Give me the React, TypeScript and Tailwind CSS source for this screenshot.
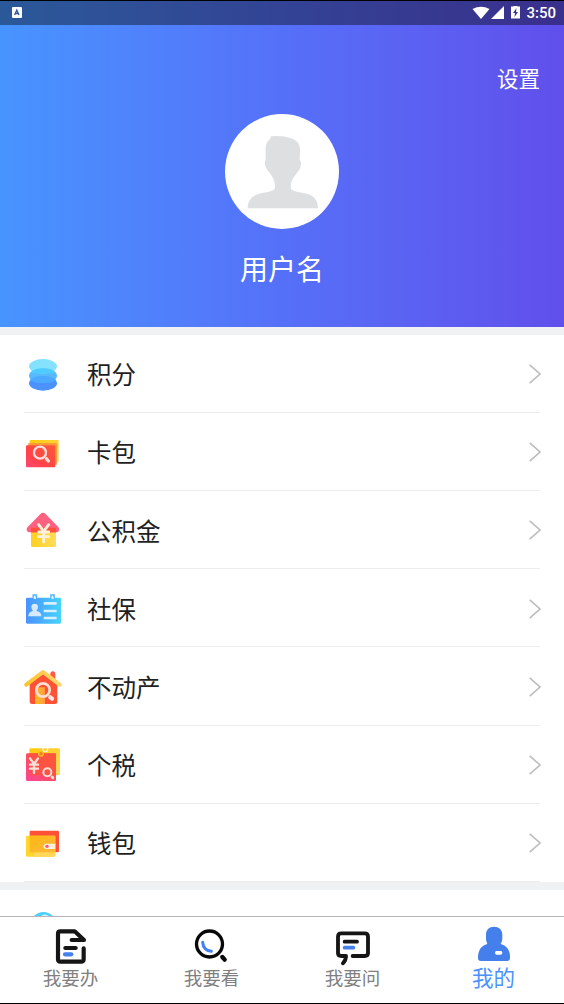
import type { ReactNode } from 'react';

function Defs() {
  return (
    <defs>
      <linearGradient id="amber" x1="0" y1="0" x2="1" y2="1">
        <stop offset="0" stopColor="#ffcb05" />
        <stop offset="1" stopColor="#ffd768" />
      </linearGradient>
      <linearGradient id="red" x1="0" y1="1" x2="1" y2="0">
        <stop offset="0" stopColor="#ff457b" />
        <stop offset="0.35" stopColor="#ff4348" />
        <stop offset="1" stopColor="#ff5a36" />
      </linearGradient>
      <linearGradient id="pink" x1="0" y1="1" x2="1" y2="0">
        <stop offset="0" stopColor="#ff459b" />
        <stop offset="0.5" stopColor="#ff4d5c" />
        <stop offset="1" stopColor="#ff5a36" />
      </linearGradient>
      <linearGradient id="house" x1="0" y1="0" x2="1" y2="0">
        <stop offset="0" stopColor="#ffd11f" />
        <stop offset="1" stopColor="#ffdc59" />
      </linearGradient>
      <linearGradient id="sky" x1="0" y1="0" x2="1" y2="0">
        <stop offset="0" stopColor="#4b92ff" />
        <stop offset="1" stopColor="#45d3ff" />
      </linearGradient>
      <linearGradient id="door" x1="0" y1="0" x2="1" y2="0">
        <stop offset="0" stopColor="#fdbd1c" />
        <stop offset="1" stopColor="#ff9a45" />
      </linearGradient>
      <linearGradient id="roof" x1="0" y1="0" x2="1" y2="0">
        <stop offset="0" stopColor="#fdc32c" />
        <stop offset="1" stopColor="#ffd870" />
      </linearGradient>
      <linearGradient id="wallet" x1="0" y1="0" x2="1" y2="1">
        <stop offset="0" stopColor="#fdb913" />
        <stop offset="1" stopColor="#ffb83c" />
      </linearGradient>
    </defs>
  );
}

const Coins = (
  <>
    <ellipse cx="57" cy="88" rx="42" ry="22" fill="#4b92ff" />
    <ellipse cx="57" cy="65" rx="42" ry="22" fill="#58b9ff" />
    <ellipse cx="57" cy="37" rx="42" ry="22" fill="#84e1ff" />
    <path d="M19 55.500Q30 43 57 43t38 12.500Q84 59 57 59T19 55.500Z" fill="#4ecbff" />
    <path d="M17 78Q30 66 57 66t40 12Q86 87 57 87T17 78Z" fill="#4ba9ff" />
  </>
);

const Cards = (
  <>
    <rect x="17" y="24" width="87" height="67" rx="3" fill="url(#amber)" />
    <rect x="12" y="33" width="87" height="66" rx="3" fill="#ff8a35" fillOpacity="0.75" />
    <rect x="6" y="40" width="88" height="66" rx="3" fill="url(#red)" />
    <circle cx="48" cy="62" r="18" fill="none" stroke="#ffdcd8" strokeWidth="7" />
    <path d="m67 80 6 7" stroke="#ffdcd8" strokeWidth="10" strokeLinecap="round" />
  </>
);

const House = (
  <>
    <path d="M21 55h75v52q0 4-4 4H25q-4 0-4-4Z" fill="url(#house)" />
    <path d="M50 11q7-6 14 0l38 39c8 8 3 17-6 17H18c-9 0-14-9-6-17Z" fill="#ff5576" fillOpacity="0.93" />
    <path d="M21 53h75v14H21Z" fill="#ff5138" />
    <path d="m44 44 15 20 15-20M59 64v32M44 66h30M44 80h30" fill="none" stroke="#fff0d9" strokeWidth="8.500" strokeLinecap="round" />
  </>
);

const IdCard = (
  <>
    <path d="M28 29V18h9v11M81 29V18h9v11" fill="none" stroke="#58b4ff" strokeWidth="5" />
    <rect x="6" y="26" width="105" height="78" rx="4" fill="url(#sky)" />
    <path d="M29 23h7v7h-7ZM82 23h7v7h-7Z" fill="#d6f0ff" />
    <path d="M22 54a10 10 0 0 1 20 0q0 6-4 10v2q14 3 14 16H13q0-13 13-16v-2q-4-4-4-10Z" fill="#d6eaff" />
    <path d="M59 43h39M59 66h39M59 87h39" stroke="#d6f0ff" strokeWidth="8" />
  </>
);

const Home = (
  <>
    <path d="M79 44V21q0-8 7.500-8t7.500 8v30Z" fill="#ff5a45" />
    <path d="M17 45 57 16l43 29v59q0 7-7 7H24q-7 0-7-7Z" fill="#ff5136" />
    <path d="M33 61h30v50H33Z" fill="url(#door)" />
    <path d="M7 53 57 15l50 38" fill="none" stroke="url(#roof)" strokeWidth="12" strokeLinecap="round" strokeLinejoin="round" />
    <circle cx="57" cy="69" r="20" fill="none" stroke="#ffdfd2" strokeWidth="8" />
    <path d="m79 91 5 4" stroke="#ffe5df" strokeWidth="13" strokeLinecap="round" />
  </>
);

const Tax = (
  <>
    <rect x="16" y="10" width="92" height="81" rx="4" fill="url(#amber)" />
    <rect x="6" y="25" width="90" height="83" rx="4" fill="url(#pink)" />
    <path d="M16 25h80v66H16Z" fill="#ff5439" fillOpacity="0.65" />
    <circle cx="64" cy="13" r="7" fill="#ffc72c" stroke="#fff5ce" strokeWidth="4" />
    <path d="M54 5h20v5H54Z" fill="#fff" />
    <circle cx="51" cy="26" r="7" fill="#ff7632" stroke="#ffc21a" strokeWidth="4" />
    <path d="m18 40 12 17 12-17M30 57v27M18 59h24M18 71h24" fill="none" stroke="#ffe0d8" strokeWidth="7" strokeLinecap="round" />
    <circle cx="70" cy="82" r="12" fill="none" stroke="#ffdbd5" strokeWidth="6" />
    <path d="m84 96 2 2" stroke="#ffdbd5" strokeWidth="9" strokeLinecap="round" />
  </>
);

const Wallet = (
  <>
    <rect x="17" y="23" width="88" height="65" rx="4" fill="#ff5136" />
    <rect x="6" y="38" width="88" height="63" rx="4" fill="#ffd62d" />
    <path d="M94 88v9q0 4-4 4H30V88Z" fill="#ffd85b" />
    <path d="M17 38h77v50H17Z" fill="url(#wallet)" />
    <path d="M94 62H67a8 8 0 0 0 0 16h27Z" fill="#fff0d9" />
    <circle cx="69" cy="70" r="5" fill="#ff5276" />
  </>
);

const rows: { label: string; icon: ReactNode }[] = [
  { label: '积分', icon: Coins },
  { label: '卡包', icon: Cards },
  { label: '公积金', icon: House },
  { label: '社保', icon: IdCard },
  { label: '不动产', icon: Home },
  { label: '个税', icon: Tax },
  { label: '钱包', icon: Wallet },
];

const tabs: { label: string; active?: boolean; icon: ReactNode }[] = [
  {
    label: '我要办',
    icon: (
      <g fill="none" stroke="#151515" strokeWidth="12.500" strokeLinecap="round" strokeLinejoin="round">
        <path d="M62 42h37L71 16H28q-7 0-7 7v77q0 7 7 7h62q8 0 8-7V67M43 66h31" />
        <path d="M42 85h19" stroke="#4580eb" />
      </g>
    ),
  },
  {
    label: '我要看',
    icon: (
      <g fill="none" strokeLinecap="round">
        <circle cx="52.5" cy="54" r="39" stroke="#080808" strokeWidth="10" />
        <path d="m91 93 7 8" stroke="#080808" strokeWidth="13" />
        <path d="M32 49q2 24 26 27" stroke="#4580f5" strokeWidth="9" />
      </g>
    ),
  },
  {
    label: '我要问',
    icon: (
      <g fill="none" stroke="#151515" strokeWidth="11.500" strokeLinecap="round" strokeLinejoin="round">
        <path d="M59 90h36q10 0 10-9V32q0-10-10-10H25q-10 0-10 10v49q0 9 10 9h14q0 12-9 22M35 47h37" />
        <path d="M35 65h26" stroke="#4580eb" />
      </g>
    ),
  },
  {
    label: '我的',
    active: true,
    icon: (
      <path
        fillRule="evenodd"
        fill="#447feb"
        d="M36 26C36 10 46 2 60 2s25 8 25 24v12q0 8-5 16c18 5 29 18 28 42q0 9-9 9H21q-9 0-9-9c0-24 10-37 28-42q-4-8-4-16ZM67 75q-4 0-4 5.500t4 5.500h14q4 0 4-5.500t-4-5.500Z"
      />
    ),
  },
];

export default function App() {
  return (
    <div className="flex h-[1004px] w-[564px] flex-col overflow-hidden border-y border-black bg-white font-['Noto_Sans_CJK_SC',sans-serif]">
      <header className="flex h-[325.600px] shrink-0 flex-col bg-linear-to-r from-[#4794ff] via-[#5570f8] to-[#604feb]">
        <div className="flex h-[23.500px] shrink-0 items-center bg-black/40 pl-[12px] pr-[8px]">
          <svg className="h-[11px] w-[10px]" viewBox="0 0 10 11">
            <rect width="10" height="11" rx="1" fill="#fff" />
            <path d="m2.600 8 2.200-5 2.200 5M3.500 6.500h2.700" fill="none" stroke="#2f5593" strokeWidth="1.300" />
          </svg>
          <svg className="ml-auto h-[14px] w-[49px]" viewBox="0 0 49 14" fill="#fff">
            <path d="M.5 3Q9-1.500 17.500 3L9 13Z" />
            <path d="M32 0v13H19Z" />
            <path fillRule="evenodd" d="M41.500-1h4V.500H48V12.500h-9V.500h2.500ZM44.500 2 41 7h2l-.5 4L46 6h-2Z" />
          </svg>
          <span className="ml-[5px] pt-px font-[Roboto,sans-serif] text-[15px] font-medium leading-none text-white">3:50</span>
        </div>
        <div className="flex justify-end pr-6 pt-[37px] text-[21.500px] leading-8 text-white">设置</div>
        <div className="flex flex-col items-center pt-[20.500px]">
          <svg className="h-[115px] w-[114px]" viewBox="0 0 342 345">
            <ellipse cx="171" cy="172.500" rx="171" ry="172.500" fill="#fff" />
            <path
              fill="#dddfe1"
              d="M138 67q32-4 58 5c25 9 30 20 29 42l-1 25c7 3 5 20-3 31-16 20-24 30-24 50q0 7 6 9c10 5 20 7 33 8q43 7 43 46H68q0-38 43-46c13-1 23-3 33-8q6-3 6-9c0-20-5-30-21-50-9-11-12-26-7-33 1-22-4-46 8-57q8-5 8-13Z"
            />
          </svg>
          <span className="mt-[18px] text-[28px] leading-[42px] text-white">用户名</span>
        </div>
      </header>

      <main className="h-[589.400px] shrink-0 overflow-hidden bg-[#eff1f3] pt-[8px]">
        <ul className="bg-white px-6">
          {rows.map(({ label, icon }) => (
            <li key={label} className="flex h-[78.200px] items-center border-b border-[#ececec] pt-[1.500px]">
              <svg className="size-10" viewBox="0 0 120 120">
                <Defs />
                {icon}
              </svg>
              <span className="ml-[23px] pt-[0.500px] text-[24.500px] leading-9 text-[#1f1f1f]">{label}</span>
              <svg className="-mr-px ml-auto h-5 w-3" viewBox="0 0 12 20" fill="none">
                <path d="m.7.800 10.300 9.200L.7 19.200" stroke="#bdbdbd" strokeWidth="1.600" />
              </svg>
            </li>
          ))}
        </ul>
        <div className="mt-[8px] h-[30px] bg-white px-6 pt-[22px]">
          <svg className="size-10" viewBox="0 0 40 40">
            <circle cx="19.500" cy="13" r="13" fill="#4ed0ff" />
            <path d="M18 4q4-2 7 1" fill="none" stroke="#d5f4ff" strokeWidth="1.500" />
          </svg>
        </div>
      </main>

      <nav className="grid h-[87px] shrink-0 grid-cols-4 border-t border-[#b5b5b5] bg-white">
        {tabs.map(({ label, icon, active }) => (
          <div key={label} className="flex flex-col items-center pt-[9px]">
            <svg className="size-10 shrink-0" viewBox="0 0 120 120">
              {icon}
            </svg>
            <span className={active ? '-mt-px text-[21.500px] leading-6 text-[#4b92ff]' : '-mt-px text-[18.500px] leading-6 text-[#808080]'}>{label}</span>
          </div>
        ))}
      </nav>
    </div>
  );
}
